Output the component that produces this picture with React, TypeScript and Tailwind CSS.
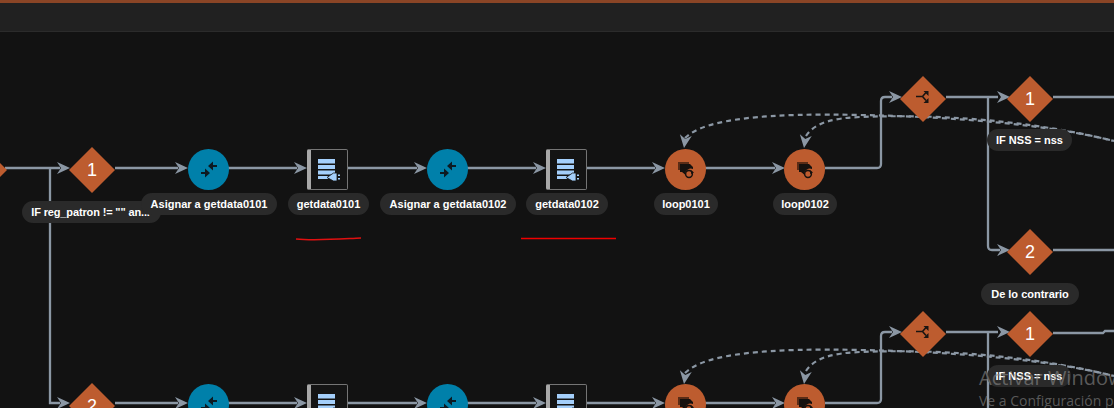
import React from 'react';

const CANVAS_TOP = 32;
const EDGE = '#8b97a4';

type Pill = { text: string; x: number; y: number; w: number; extra?: string };

const pills: Pill[] = [
  { text: 'IF reg_patron != "" an...', x: 22, y: 201, w: 139, extra: 'pr-[2px] tracking-[-0.14px]' },
  { text: 'Asignar a getdata0101', x: 141, y: 193, w: 136 },
  { text: 'getdata0101', x: 288, y: 193, w: 81 },
  { text: 'Asignar a getdata0102', x: 380, y: 193, w: 136 },
  { text: 'getdata0102', x: 526, y: 193, w: 82 },
  { text: 'loop0101', x: 654, y: 193, w: 64 },
  { text: 'loop0102', x: 773, y: 193, w: 64 },
  { text: 'IF NSS = nss', x: 987, y: 129, w: 85 },
  { text: 'De lo contrario', x: 981, y: 283, w: 98 },
  { text: 'IF NSS = nss', x: 987, y: 365, w: 84 },
];

const Arrow = ({ x, y, dir = 'right' }: { x: number; y: number; dir?: 'right' | 'down' }) => (
  <path
    d="M0 0 L-13 -6 L-9 0 L-13 6 Z"
    fill={EDGE}
    transform={`translate(${x} ${y}) rotate(${dir === 'right' ? 0 : 98})`}
  />
);

const Edges = () => (
  <svg className="absolute inset-0" width={1114} height={376} viewBox="0 32 1114 376" fill="none">
    <g stroke={EDGE} strokeWidth={2.3}>
      <path d="M5 168 H60" />
      <path d="M50 168 V403 H60" />
      <path d="M115 168 H178 M228 168 H297 M347 168 H417 M467 168 H536 M586 168 H655 M705 168 H775" />
      <path d="M825 168 H877 Q881 168 881 164 V101 Q881 97 885 97 H892" />
      <path d="M946 97 H998 M1053 97 H1114" />
      <path d="M988 97 V246 Q988 250 992 250 H1000 M1053 250 H1114" />
      <path d="M115 403 H178 M228 403 H297 M347 403 H417 M467 403 H536 M586 403 H655 M705 403 H775" />
      <path d="M825 403 H877 Q881 403 881 399 V336 Q881 332 885 332 H892" />
      <path d="M946 332 H998" />
      <path d="M988 332 V408" />
      <path d="M1053 333 H1103 L1105 331 H1114" />
    </g>
    <g stroke={EDGE} strokeWidth={2.2} strokeDasharray="5 4">
      <path d="M685 138 C705 118 770 113 860 115 C960 117 1050 125 1114 141" />
      <path d="M806 136 C815 122 835 118 860 117 C960 113 1050 125 1114 141" />
      <path d="M685 373 C705 353 770 348 860 350 C960 352 1050 360 1114 376" />
      <path d="M806 371 C815 357 835 353 860 352 C960 348 1050 360 1114 376" />
    </g>
    <g>
      <Arrow x={70} y={168} />
      <Arrow x={70} y={403} />
      {[188, 307, 427, 546, 665, 785].flatMap((x) => [
        <Arrow key={`a${x}`} x={x} y={168} />,
        <Arrow key={`b${x}`} x={x} y={403} />,
      ])}
      <Arrow x={902} y={97} />
      <Arrow x={1010} y={97} />
      <Arrow x={1010} y={250} />
      <Arrow x={902} y={332} />
      <Arrow x={1010} y={332} />
      <Arrow x={684} y={148} dir="down" />
      <Arrow x={804} y={148} dir="down" />
      <Arrow x={684} y={384} dir="down" />
      <Arrow x={804} y={384} dir="down" />
    </g>
    <path d="M296 239 C315 241 340 239 361 238" stroke="#e01010" strokeWidth={1.5} />
    <path d="M521 238.5 H616" stroke="#f00000" strokeWidth={1.5} />
  </svg>
);

const Diamond = ({ x, y, children }: { x: number; y: number; children: React.ReactNode }) => (
  <div
    className="absolute flex h-[46px] w-[46px] items-center justify-center"
    style={{ left: x - 23, top: y - 23 - CANVAS_TOP }}
  >
    <svg className="absolute inset-0" width={46} height={46} viewBox="0 0 46 46">
      <path d="M23 0 L46 23 L23 46 L0 23 Z" fill="#bd5c2f" />
    </svg>
    <span className="relative text-[18px] leading-none text-white">{children}</span>
  </div>
);

const SplitIcon = () => (
  <svg width={20} height={20} viewBox="0 0 20 20" className="block">
    <path d="M3 7.5 H9.5 M9.5 7.5 L13 3.5 M9.5 7.5 L13 11.5" stroke="#1a1512" strokeWidth={1.6} fill="none" />
    <path d="M10.5 2 H15.5 V7 Z M10.5 14 H15.5 V9 Z" fill="#1a1512" />
  </svg>
);

const AssignIcon = () => (
  <svg width={20} height={20} viewBox="0 0 20 20" className="block">
    <path d="M13 6 H18 M2 13 H7" stroke="#0d1a22" strokeWidth={2.2} fill="none" />
    <path d="M9 6 L14 1.5 V10.5 Z M11 13 L6 8.5 V17.5 Z" fill="#0d1a22" />
  </svg>
);

const LoopIcon = () => (
  <svg width={20} height={20} viewBox="0 0 20 20" className="block">
    <path d="M2 2 H13 V4 H4 V10 H2 Z" fill="#5a2c16" />
    <path d="M4 4 H14 L17 7 V9 A6 6 0 0 0 9 14.5 L6 12 H4 Z" fill="#16110e" />
    <circle cx="13" cy="14" r="3.4" stroke="#16110e" strokeWidth={1.5} fill="none" />
    <path d="M15 10 L18 12.5 L15 14 Z" fill="#16110e" />
  </svg>
);

const Circle = ({ x, y, color, children }: { x: number; y: number; color: string; children: React.ReactNode }) => (
  <div
    className={`absolute flex h-[41px] w-[41px] items-center justify-center rounded-full ${color}`}
    style={{ left: x - 20, top: y - CANVAS_TOP }}
  >
    {children}
  </div>
);

const ServiceBox = ({ x, y }: { x: number; y: number }) => (
  <div
    className="absolute flex h-[41px] w-[41px] items-center justify-center rounded-[2px] border border-l-[4px] border-[#757575] border-l-[#a8a8a8] bg-[#141414]"
    style={{ left: x, top: y - CANVAS_TOP }}
  >
    <svg width={24} height={24} viewBox="0 0 24 24" className="block">
      <path d="M1 1 H18 V5.5 H1 Z M1 7 H18 V11 H1 Z M1 12.5 H18 V16.5 H1 Z M1 18 H11 V21 H1 Z" fill="#a4cffb" />
      <path d="M10 19.5 L16.5 15 H20 V23 H16.5 Z" fill="#a4cffb" stroke="#141414" strokeWidth={0.8} />
      <path d="M21 16.5 H23 V18 H21 Z M21 20 H23 V21.5 H21 Z" fill="#a4cffb" />
    </svg>
  </div>
);

const App: React.FC = () => {
  return (
    <div className="flex h-[408px] w-[1114px] flex-col overflow-hidden bg-[#121212] font-['Liberation_Sans',Arial,sans-serif]">
      {/* Header */}
      <div className="h-[3px] bg-[#8a4526]" />
      <div className="h-[29px] border-b border-[#2b2b2b] bg-[#212121]" />

      {/* Flow canvas */}
      <div className="relative flex-1 overflow-hidden">
        <Edges />

        <Diamond x={-16} y={170}>{''}</Diamond>
        <Diamond x={92} y={170}>1</Diamond>
        <Diamond x={92} y={406}>2</Diamond>
        <Diamond x={923} y={99}><SplitIcon /></Diamond>
        <Diamond x={1030} y={99}>1</Diamond>
        <Diamond x={1030} y={252}>2</Diamond>
        <Diamond x={923} y={334}><SplitIcon /></Diamond>
        <Diamond x={1030} y={334}>1</Diamond>

        {[149, 384].map((y) => (
          <React.Fragment key={y}>
            <Circle x={208} y={y} color="bg-[#0080aa]"><AssignIcon /></Circle>
            <ServiceBox x={307} y={y} />
            <Circle x={447} y={y} color="bg-[#0080aa]"><AssignIcon /></Circle>
            <ServiceBox x={546} y={y} />
            <Circle x={685} y={y} color="bg-[#bd5c2f]"><LoopIcon /></Circle>
            <Circle x={804} y={y} color="bg-[#bd5c2f]"><LoopIcon /></Circle>
          </React.Fragment>
        ))}

        {pills.map((p) => (
          <div
            key={`${p.text}${p.y}`}
            className={`absolute flex h-[22px] items-center justify-center whitespace-nowrap rounded-full bg-[#2a2a2a] text-[11px] font-bold text-white ${p.extra ?? ''}`}
            style={{ left: p.x, top: p.y - CANVAS_TOP, width: p.w }}
          >
            {p.text}
          </div>
        ))}

        {/* Windows activation watermark */}
        <div className="pointer-events-none absolute left-[979px] top-[333px] whitespace-nowrap font-['Open_Sans',sans-serif] text-[#8a8a8a]/60">
          <div className="text-[20px] leading-[26px]">Activar Windows</div>
          <div className="text-[14px] leading-[20px]">Ve a Configuración para activar Windows.</div>
        </div>
      </div>
    </div>
  );
};

export default App;
